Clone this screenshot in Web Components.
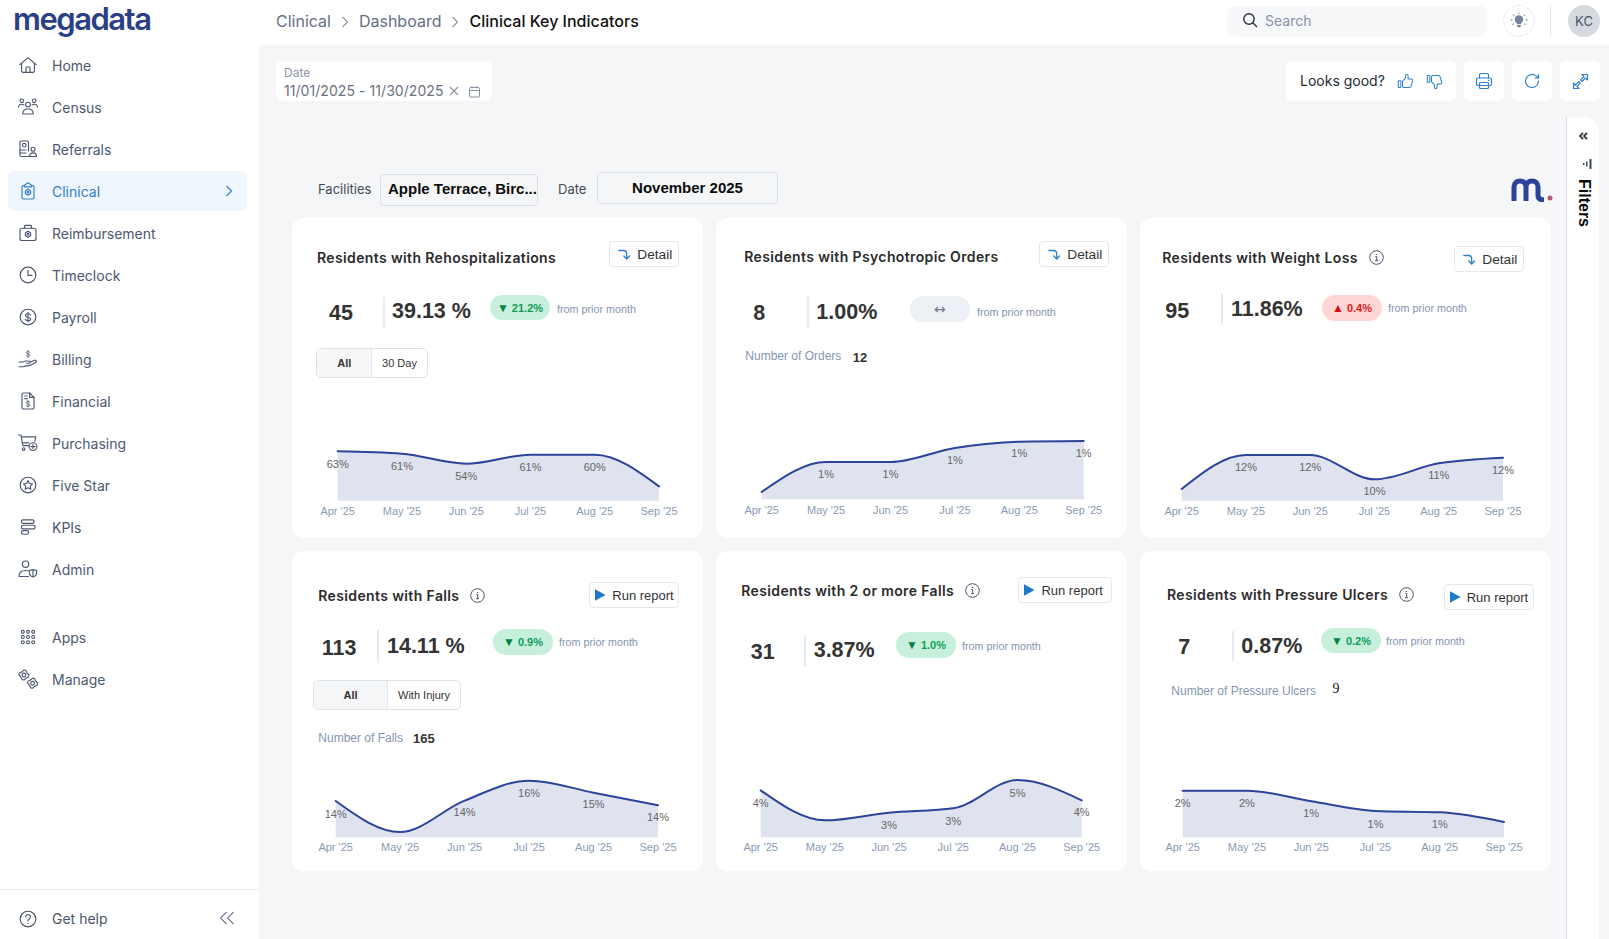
<!DOCTYPE html>
<html lang="en">
<head>
<meta charset="UTF-8">
<title>Clinical Key Indicators</title>
<style>
  html, body { margin: 0; height: 100%; }
  body { display: flex; width: 1609px; height: 939px; overflow: hidden; background: #f5f6f8; font-family: Inter, "Liberation Sans", sans-serif; }
</style>
</head>
<body>
<side-nav>
  <nav-item icon="home">Home</nav-item>
  <nav-item icon="census">Census</nav-item>
  <nav-item icon="referrals">Referrals</nav-item>
  <nav-item icon="clinical" active>Clinical</nav-item>
  <nav-item icon="reimb">Reimbursement</nav-item>
  <nav-item icon="clock">Timeclock</nav-item>
  <nav-item icon="payroll">Payroll</nav-item>
  <nav-item icon="billing">Billing</nav-item>
  <nav-item icon="financial">Financial</nav-item>
  <nav-item icon="cart">Purchasing</nav-item>
  <nav-item icon="star">Five Star</nav-item>
  <nav-item icon="kpis">KPIs</nav-item>
  <nav-item icon="admin">Admin</nav-item>
  <nav-item icon="apps" style="margin-top:26px">Apps</nav-item>
  <nav-item icon="manage">Manage</nav-item>
</side-nav>
<main-area>
  <top-bar></top-bar>
  <tool-bar></tool-bar>
  <dash-body></dash-body>
</main-area>

<script>
  // small $ used by the money icons
  const dollar = (x, y, s) => `<g transform="translate(${x} ${y}) scale(${s})"><path d="M2.6-1.9C2.2-2.8 1.3-3.3 0-3.3c-1.5 0-2.6.7-2.6 1.7C-2.6.9 2.7-.4 2.7 2c0 1-1.2 1.7-2.7 1.7-1.4 0-2.4-.5-2.8-1.4M0-4.8V5"/></g>`;

  function gear(cx, cy, r) {
    let d = '';
    for (let i = 0; i < 16; i++) {
      const a = i * Math.PI / 8, rr = i % 4 < 2 ? r : r * .78;
      d += (i ? 'L' : 'M') + (cx + rr * Math.cos(a)).toFixed(2) + ' ' + (cy + rr * Math.sin(a)).toFixed(2);
    }
    return `<path d="${d}z"/><circle cx="${cx}" cy="${cy}" r="${(r * .38).toFixed(2)}"/>`;
  }

  const hex = (cx, cy) => `<path d="M${cx} ${cy - 3}l2.6 1.5v3L${cx} ${cy + 3}l-2.6-1.5v-3z"/><circle cx="${cx}" cy="${cy}" r=".9"/>`;

  const ICONS = {
    home: '<path d="M1.8 9.6 10 2.6l8.2 7"/><path d="M3.6 8.2V16A1.4 1.4 0 0 0 5 17.4h10a1.4 1.4 0 0 0 1.4-1.4V8.2"/><path d="M8 17.4v-4.6a.8.8 0 0 1 .8-.8h2.4a.8.8 0 0 1 .8.8v4.6"/>',
    census: '<circle cx="3.8" cy="3.8" r="1.8"/><circle cx="16.2" cy="3.8" r="1.8"/><circle cx="10" cy="7.6" r="2.4"/><path d="M.2 10C.8 8.2 2 7.2 3.8 7.2c.8 0 1.5.2 2.1.7"/><path d="M19.8 10c-.6-1.8-1.8-2.8-3.6-2.8-.8 0-1.5.2-2.1.7"/><path d="M4.8 16.2c0-2.6 2-4.2 5.2-4.2s5.2 1.6 5.2 4.2v.8H4.8z"/>',
    referrals: '<path d="M10.5 17.5H3.4A1.4 1.4 0 0 1 2 16.1V3.4A1.4 1.4 0 0 1 3.4 2h5.7a1.4 1.4 0 0 1 1.4 1.4V12"/><circle cx="6.2" cy="6.2" r="1.8"/><path d="M2 11h6M2 14h6"/><circle cx="15" cy="10.2" r="2"/><path d="M11.5 17.5c0-2.3 1.4-3.7 3.5-3.7s3.5 1.4 3.5 3.7z"/>',
    clinical: '<path d="M6.5 4.2 10 1.8l3.5 2.4v1.6h-7z"/><path d="M6.5 4.6H5.4A1.4 1.4 0 0 0 4 6v10.6A1.4 1.4 0 0 0 5.4 18h9.2a1.4 1.4 0 0 0 1.4-1.4V6a1.4 1.4 0 0 0-1.4-1.4h-1.1"/>' + hex(10, 11.2),
    reimb: '<rect x="2" y="5.2" width="16" height="12.3" rx="2"/><path d="M6.5 5.2V3.4a1 1 0 0 1 1-1h5a1 1 0 0 1 1 1v1.8"/>' + hex(10, 11.3),
    clock: '<circle cx="10" cy="10" r="7.8"/><path d="M10 5.2v5.2h4"/>',
    payroll: '<circle cx="10" cy="10" r="7.8"/>' + dollar(10, 10, 1),
    billing: dollar(10, 4.8, .7) + '<path d="M1 13h4.2l2.3-1h3.6a1.1 1.1 0 0 1 0 2.2H8.4"/><path d="M12 13.3l4.6-2a1.2 1.2 0 0 1 1.3 2L12 16.4l-5 .7-2 .6H1"/>',
    financial: '<path d="M11.6 2H5.4A1.4 1.4 0 0 0 4 3.4v13.2A1.4 1.4 0 0 0 5.4 18h9.2a1.4 1.4 0 0 0 1.4-1.4V6.4z"/><path d="M11.6 2v4.4H16"/><path d="M6.6 5h2.6M6.6 7.6h2.6"/>' + dollar(10, 12.6, .7),
    cart: '<path d="M.4 2h2.6l1.8 10.6h6.6"/><path d="M3.4 3.8h14.4l-1 4.4"/><path d="M4.4 9.8h6.4"/><circle cx="5.6" cy="16" r="1.3"/><circle cx="15" cy="13.6" r="3.9"/><path d="M15 11.6v4M13 13.6h4"/>',
    star: '<circle cx="10" cy="10" r="7.8"/><path d="m10 5.6 1.4 2.9 3.1.4-2.3 2.2.6 3.1-2.8-1.5-2.8 1.5.6-3.1-2.3-2.2 3.1-.4z"/>',
    kpis: '<rect x="3.5" y="2.8" width="12.5" height="3.6" rx="1.4"/><rect x="3.5" y="8.2" width="13.5" height="3.6" rx="1.4"/><rect x="3.5" y="13.6" width="7" height="3.6" rx="1.4"/>',
    admin: '<circle cx="7.5" cy="5.2" r="3.2"/><path d="M10.2 11.8c-.8-.2-1.7-.3-2.7-.3-4 0-6.5 2-6.5 5.6v.4h9.6"/><path d="M15 10.6c-2 .6-3.6.7-3.6.7v2.6c0 1.9 1.4 3.3 3.6 4.1 2.2-.8 3.6-2.2 3.6-4.1v-2.6s-1.6-.1-3.6-.7zM15 10.6V18"/>',
    apps: [4.8, 10, 15.2].map(y => [4.8, 10, 15.2].map(x => `<circle cx="${x}" cy="${y}" r="1.5"/>`).join('')).join(''),
    manage: gear(6, 6, 5) + gear(14.6, 14.2, 5),
    help: '<circle cx="10" cy="10" r="7.8"/><path d="M7.6 8a2.4 2.4 0 1 1 3.8 1.9c-.8.6-1.4 1-1.4 2"/><path d="M10 14.2v.2"/>'
  };

  const svg = (inner, size = 20, extra = '') =>
    `<svg width="${size}" height="${size}" viewBox="0 0 20 20" fill="none" stroke="currentColor" stroke-width="1.15" stroke-linecap="round" stroke-linejoin="round" ${extra}>${inner}</svg>`;

  class SideNav extends HTMLElement {
    connectedCallback() {
      if (this.shadowRoot) return;
      this.attachShadow({mode: 'open'}).innerHTML = `
        <style>
          :host { display: flex; flex-direction: column; flex: none; width: 259px; height: 939px; background: #fff; }
          .logo { height: 45px; padding-left: 13px; font: 600 31px/38px "Inter", sans-serif; letter-spacing: -1.5px; color: #2a3f86; box-sizing: border-box; }
          nav { display: flex; flex-direction: column; }
          footer { margin-top: auto; height: 50px; border-top: 1px solid #e9eaee; display: flex; align-items: center; padding: 8px 0 0 18px; box-sizing: border-box; color: #4b5563; font-size: 14px; }
          footer span { margin-left: 14px; }
          footer svg:last-child { margin-left: auto; margin-right: 24px; margin-bottom: 2px; color: #737d92; }
        </style>
        <div class="logo">megadata</div>
        <nav><slot></slot></nav>
        <footer>${svg(ICONS.help)}<span>Get help</span>
          <svg width="16" height="14" viewBox="0 0 16 14" fill="none" stroke="currentColor" stroke-width="1.1"><path d="M7.5 1 1.5 7l6 6M14.5 1l-6 6 6 6"/></svg>
        </footer>`;
    }
  }

  class NavItem extends HTMLElement {
    connectedCallback() {
      if (this.shadowRoot) return;
      const active = this.hasAttribute('active');
      this.attachShadow({mode: 'open'}).innerHTML = `
        <style>
          :host { display: flex; align-items: center; height: 40px; margin: 0 12px 2px 8px; padding-left: 10px; box-sizing: border-box; border-radius: 6px; font-size: 14px; color: #4d5870; }
          :host([active]) { background: #f0f6fd; color: #2f7fcb; }
          svg { flex: none; }
          span { margin-left: 14px; }
          .chev { margin: 0 14px 0 auto; }
        </style>
        ${svg(ICONS[this.getAttribute('icon')])}
        <span><slot></slot></span>
        ${active ? '<svg class="chev" width="8" height="12" viewBox="0 0 8 12" fill="none" stroke="currentColor" stroke-width="1.1"><path d="m1.5 1 5 5-5 5"/></svg>' : ''}`;
    }
  }

  class MainArea extends HTMLElement {
    connectedCallback() {
      if (this.shadowRoot) return;
      this.attachShadow({mode: 'open'}).innerHTML = `
        <style>:host { display: flex; flex-direction: column; flex: 1; min-width: 0; height: 939px; }</style>
        <slot></slot>`;
    }
  }

  class TopBar extends HTMLElement {
    connectedCallback() {
      if (this.shadowRoot) return;
      const chev = '<svg class="sep" width="8" height="12" viewBox="0 0 8 12" fill="none" stroke="#8b93a3" stroke-width="1.1"><path d="m1.5 1 5 5-5 5"/></svg>';
      this.attachShadow({mode: 'open'}).innerHTML = `
        <style>
          :host { display: flex; align-items: center; flex: none; height: 45px; padding: 0 9px 3px 17px; box-sizing: border-box; background: #fff; font-size: 16px; color: #667085; }
          .sep { margin: 1px 10px 0; }
          b { font-weight: 500; color: #111; }
          .search { display: flex; align-items: center; width: 260px; height: 32px; margin-left: auto; padding: 0 0 2px 15px; box-sizing: border-box; background: #f7f8f9; border-radius: 9px; font-size: 14px; color: #8791a8; }
          .search svg { margin-right: 7px; }
          .bulb { width: 32px; height: 32px; margin: 0 15px 0 16px; box-sizing: border-box; border: 1px solid #eceef1; border-radius: 50%; display: flex; align-items: center; justify-content: center; }
          .div { width: 1px; height: 32px; background: #e6e8ec; }
          .kc { width: 32px; height: 32px; margin-left: 17px; border-radius: 50%; background: #d5dae1; color: #4b5563; font-size: 13px; display: flex; align-items: center; justify-content: center; }
        </style>
        <span>Clinical</span>${chev}<span>Dashboard</span>${chev}<b>Clinical Key Indicators</b>
        <div class="search">
          <svg width="16" height="16" viewBox="0 0 16 16" fill="none" stroke="#2b2f36" stroke-width="1.4" stroke-linecap="round"><circle cx="7" cy="7" r="5.2"/><path d="m11 11 3.6 3.6"/></svg>
          Search
        </div>
        <div class="bulb">
          <svg width="18" height="18" viewBox="0 0 16 16" fill="#76839a" stroke="#76839a" stroke-width=".9" stroke-linecap="round"><path stroke="none" d="M8 3a3.7 3.7 0 0 0-2.2 6.7c.4.3.6.7.6 1.2h3.2c0-.5.2-.9.6-1.2A3.7 3.7 0 0 0 8 3z"/><path stroke="none" d="M6.5 11.6h3v1.1l-.7.9H7.2l-.7-.9z"/><path d="M8 .8v.6M3 2.6l.5.5M13 2.6l-.5.5M.9 7h1M14.1 7h1M2.4 11l.6-.5M13.6 11l-.6-.5"/></svg>
        </div>
        <div class="div"></div>
        <div class="kc">KC</div>`;
    }
  }

  class ToolBar extends HTMLElement {
    connectedCallback() {
      if (this.shadowRoot) return;
      const blue = 'fill="none" stroke="#2f7fcb" stroke-width="1.2" stroke-linecap="round" stroke-linejoin="round"';
      const thumb = '<rect x="1.5" y="9" width="3" height="8" rx=".5"/><path d="M6.5 9.5 10 6V3a1.5 1.5 0 0 1 3 0v4h4a1.5 1.5 0 0 1 1.4 2l-1.8 6.5a2 2 0 0 1-1.9 1.5H8a1.5 1.5 0 0 1-1.5-1.5z"/>';
      this.attachShadow({mode: 'open'}).innerHTML = `
        <style>
          :host { display: flex; flex: none; gap: 8px; height: 40px; margin-top: 16px; padding: 0 9px 0 17px; }
          .box { background: #fff; border-radius: 6px; display: flex; align-items: center; justify-content: center; width: 40px; height: 40px; }
          .date { flex-direction: column; align-items: flex-start; justify-content: flex-start; width: 216px; padding: 4px 0 0 8px; box-sizing: border-box; margin-right: auto; }
          .date small { font-size: 12px; line-height: 15px; color: #8c95a4; }
          .val { display: flex; align-items: center; margin-top: 1px; font-size: 14px; line-height: 20px; letter-spacing: .06px; color: #6b7280; }
          .val svg { margin-left: 5px; }
          .val svg + svg { margin-left: 9px; }
          .looks { width: 170px; justify-content: flex-start; padding: 0 0 2px 14px; box-sizing: border-box; font-size: 14px; color: #1f2937; }
          .looks svg { margin-top: 2px; }
          .looks svg:first-of-type { margin-left: 12px; }
          .looks svg:last-of-type { margin-left: 12px; }
        </style>
        <div class="box date">
          <small>Date</small>
          <div class="val">11/01/2025 - 11/30/2025
            <svg width="10" height="10" viewBox="0 0 10 10" stroke="#8a93a3" stroke-width="1.1"><path d="m1 1 8 8M9 1 1 9"/></svg>
            <svg width="13" height="13" viewBox="0 0 13 13" fill="none" stroke="#8a93a3" stroke-width="1"><rect x="1.5" y="2.5" width="10" height="9.5" rx="1"/><path d="M1.5 5.5h10M4 1v2.5M9 1v2.5"/></svg>
          </div>
        </div>
        <div class="box looks">Looks good?
          <svg width="17" height="17" viewBox="0 0 20 20" ${blue}>${thumb}</svg>
          <svg width="17" height="17" viewBox="0 0 20 20" ${blue}><g transform="matrix(1 0 0 -1 0 20)">${thumb}</g></svg>
        </div>
        <div class="box"><svg width="18" height="18" viewBox="0 0 18 18" ${blue}><path d="M4.5 6V3A1.5 1.5 0 0 1 6 1.5h6A1.5 1.5 0 0 1 13.5 3v3"/><rect x="1.5" y="6" width="15" height="7.5" rx="1.8"/><rect x="4.5" y="10.5" width="9" height="6" rx="1"/><path d="M13.5 8.3h.4"/></svg></div>
        <div class="box"><svg width="16" height="16" viewBox="0 0 16 16" ${blue}><path d="M14.5 8A6.5 6.5 0 1 1 12.3 3.1L14.5 5"/><path d="M14.5 1.5V5H11"/></svg></div>
        <div class="box"><svg width="17" height="17" viewBox="0 0 17 17" ${blue}><path d="M10 1.5h5.5V7l-2-2-3.3 3.3-1.5-1.5L12 3.5z"/><path d="M7 15.5H1.5V10l2 2 3.3-3.3 1.5 1.5L5 13.5z"/></svg></div>`;
    }
  }

  class DashBody extends HTMLElement {
    connectedCallback() {
      if (this.shadowRoot) return;
      this.attachShadow({mode: 'open'}).innerHTML = `
        <style>
          :host { display: flex; flex: 1; min-height: 0; margin: 16px 9px 0 33px; gap: 15px; }
          .left { width: 1259px; padding-top: 55px; }
          .filters { display: flex; align-items: center; height: 33px; margin-bottom: 13px; padding-left: 26px; font-size: 13px; color: #444b55; }
          .filters span:first-child { width: 62px; }
          .fac, .month { box-sizing: border-box; background: #f5f6f8; border: 1px solid #dcdfe4; border-radius: 4px; font: 700 15px "Liberation Sans", sans-serif; color: #0b0b0b; }
          .fac { width: 158px; height: 32px; margin-top: 2px; padding: 0 7px; line-height: 28px; white-space: nowrap; }
          .dl { margin-left: 20px; width: 39px; }
          .month { width: 181px; height: 32px; margin-bottom: 1px; text-align: center; line-height: 29px; }
          .mark { margin-left: auto; margin-right: -2px; margin-top: 3px; }
          .grid { display: grid; grid-template-columns: repeat(3, 411px); grid-auto-rows: 320px; gap: 13px; }
        </style>
        <div class="left">
          <div class="filters">
            <span>Facilities</span><div class="fac">Apple Terrace, Birc...</div>
            <span class="dl">Date</span><div class="month">November 2025</div>
            <svg class="mark" width="42" height="24" viewBox="0 0 42 24" fill="none"><path d="M3 23V9C3 5 5.5 3 9 3s6 2 6 6v14M15 9c0-4 2.5-6 6-6s6 2 6 6v8c0 3.5 2 5 6 5" stroke="#2b4399" stroke-width="5"/><circle cx="39" cy="20" r="2.5" fill="#b85a7a"/></svg>
          </div>
          <div class="grid"><slot></slot></div>
        </div>
        <filter-rail></filter-rail>`;
      this.innerHTML = CARDS.map(cardMarkup).join('');
    }
  }

  class FilterRail extends HTMLElement {
    connectedCallback() {
      if (this.shadowRoot) return;
      this.attachShadow({mode: 'open'}).innerHTML = `
        <style>
          :host { display: flex; flex-direction: column; align-items: center; flex: none; width: 33px; box-sizing: border-box; background: #fff; border-left: 1px solid #d9dce1; border-top-right-radius: 16px; padding-top: 15px; }
          .bars { margin: 19px 0 0 9px; }
          span { margin: 10px 0 0 1px; writing-mode: vertical-rl; font: 700 16px/18px "Liberation Sans", sans-serif; color: #0b0b0b; }
        </style>
        <svg width="9" height="8" viewBox="0 0 9 8" fill="none" stroke="#2b2f36" stroke-width="1.8"><path d="M4 .8 1 4l3 3.2M8 .8 5 4l3 3.2"/></svg>
        <svg class="bars" width="9" height="10" viewBox="0 0 9 10" fill="#3a4456"><rect x="0" y="4" width="1.5" height="2"/><rect x="3" y="2.5" width="1.5" height="5"/><rect x="6.5" y="0" width="2" height="10"/></svg>
        <span>Filters</span>`;
    }
  }

  // head 70 / metrics 55 / extra 95 / chart 100 = 320px card
  class KpiCard extends HTMLElement {
    connectedCallback() {
      if (this.shadowRoot) return;
      this.attachShadow({mode: 'open'}).innerHTML = `
        <style>
          :host { display: flex; flex-direction: column; background: #fff; border-radius: 12px; color: #333; }
          .head { display: flex; justify-content: space-between; align-items: flex-start; flex: none; height: 70px; padding: 0 var(--btn-right) 0 var(--title-left); }
          .title { display: flex; align-items: center; margin-top: var(--title-top); font-size: 14px; line-height: 20px; font-weight: 600; letter-spacing: .37px; color: #2b2b2b; }
          .action { margin-top: var(--btn-top); }
          .metrics { flex: none; height: 55px; }
          .extra { flex: none; height: 95px; }
        </style>
        <div class="head">
          <div class="title"><slot name="title"></slot></div>
          <div class="action"><slot name="action"></slot></div>
        </div>
        <div class="metrics"><slot name="metrics"></slot></div>
        <div class="extra"><slot name="extra"></slot></div>
        <slot></slot>`;
    }
  }

  class InfoDot extends HTMLElement {
    connectedCallback() {
      if (this.shadowRoot) return;
      this.attachShadow({mode: 'open'}).innerHTML = `
        <style>:host { display: inline-flex; margin-left: 11px; }</style>
        <svg width="15" height="15" viewBox="0 0 15 15" fill="none" stroke="#4a5568" stroke-width="1"><circle cx="7.5" cy="7.5" r="6.8"/><path d="M6.3 6.5h1.4v4M6 10.7h3.1"/><path d="M7.5 4v1" stroke-width="1.3"/></svg>`;
    }
  }

  class KpiBtn extends HTMLElement {
    connectedCallback() {
      if (this.shadowRoot) return;
      const run = this.getAttribute('kind') === 'run';
      this.attachShadow({mode: 'open'}).innerHTML = `
        <style>
          :host { display: inline-flex; align-items: center; box-sizing: border-box; height: 26px; border: 1px solid #e6e8ec; border-radius: 4px; background: #fff; font: 400 ${run ? 13 : 13.7}px "Liberation Sans", sans-serif; color: #333; padding-left: ${run ? 5 : 8}px; }
          svg { flex: none; margin-right: ${run ? 6 : 7}px; }
        </style>
        ${run
          ? '<svg width="11" height="12" viewBox="0 0 11 12" fill="#1f77c9"><path d="M0 .3 10.6 6 0 11.7z"/></svg>'
          : '<svg width="12" height="11" viewBox="0 0 12 11" fill="none" stroke="#2f7fcb" stroke-width="1.3" stroke-linecap="round" stroke-linejoin="round"><path d="M.8 1.5h4.7c2 0 3.2 1.2 3.2 3.2v5"/><path d="M5.8 7 8.7 10 11.5 7"/></svg>'}
        <slot></slot>`;
    }
  }

  class KpiMetrics extends HTMLElement {
    connectedCallback() {
      if (this.shadowRoot) return;
      const m = JSON.parse(this.getAttribute('data'));
      const tones = {
        down: 'background:#c6f0dc;color:#0f9d58',
        up: 'background:#fdd5d5;color:#e21a1a',
        flat: 'background:#edf1f5;color:#6b7a90'
      };
      const arrow = {
        down: '<i style="color:#0b8043">▼</i> ',
        up: '<i style="color:#d90f0f">▲</i> ',
        flat: '<i style="color:#6b7a90;font:400 14px \'DejaVu Sans\',sans-serif">↔</i>'
      }[m.tone];
      this.attachShadow({mode: 'open'}).innerHTML = `
        <style>
          :host { display: grid; grid-template-columns: ${m.div - m.cx}px ${m.px - m.div}px ${m.bx - m.px}px ${m.fx - m.bx}px auto; margin-left: ${m.cx}px; font-family: "Liberation Sans", sans-serif; color: #333; align-items: start; }
          .num { font-size: 21.5px; font-weight: 700; line-height: 24px; white-space: nowrap; }
          .div { width: 2px; background: #e7ebf0; }
          .badge { width: 60px; border-radius: 13px; display: flex; align-items: center; justify-content: center; font-size: 11px; font-weight: 700; white-space: pre; }
          i { font-style: normal; font-size: 12px; }
          .from { font-size: 10.75px; line-height: 16px; color: #8495b0; white-space: nowrap; }
        </style>
        <div class="num" style="margin-top:${m.cy - 82}px">${m.count}</div>
        <div class="div" style="margin-top:${m.dt - 70}px;height:${m.dh}px"></div>
        <div class="num" style="margin-top:${m.py - 82}px">${m.pct}</div>
        <div class="badge" style="margin-top:${m.bt - 70}px;height:${m.bh}px;${tones[m.tone]}">${arrow}${m.delta}</div>
        <div class="from" style="margin-top:${m.fy - 78}px">from prior month</div>`;
    }
  }

  class SegToggle extends HTMLElement {
    connectedCallback() {
      if (this.shadowRoot) return;
      this.attachShadow({mode: 'open'}).innerHTML = `
        <style>
          :host { display: flex; box-sizing: border-box; height: 30px; border: 1px solid #dfe3e8; border-radius: 5px; font: 400 11px/28px "Liberation Sans", sans-serif; color: #333; overflow: hidden; text-align: center; }
          .a { background: #f5f6f8; font-weight: 700; border-right: 1px solid #e5e8ec; box-sizing: border-box; }
          .b { flex: 1; }
        </style>
        <div class="a" style="width:${this.getAttribute('first')}px">All</div>
        <div class="b">${this.getAttribute('second')}</div>`;
    }
  }

  class KpiSub extends HTMLElement {
    connectedCallback() {
      if (this.shadowRoot) return;
      this.attachShadow({mode: 'open'}).innerHTML = `
        <style>
          :host { display: flex; font: 400 12px/16px "Liberation Sans", sans-serif; color: #8495b0; }
          b { font-size: 13px; color: #333; }
          b.plain { font: 400 14px "Liberation Serif", serif; color: #111; }
        </style>
        <span>${this.getAttribute('label')}</span>
        <b class="${this.hasAttribute('plain') ? 'plain' : ''}" style="margin-left:${this.getAttribute('gap')}px;margin-top:${this.getAttribute('drop')}px">${this.getAttribute('value')}</b>`;
    }
  }

  // same curve as d3 curveMonotoneX
  function monotone(p) {
    const n = p.length, s = [], t = [];
    for (let i = 0; i < n - 1; i++) s.push((p[i + 1][1] - p[i][1]) / (p[i + 1][0] - p[i][0]));
    const sign = v => v < 0 ? -1 : 1;
    for (let i = 1; i < n - 1; i++) {
      t[i] = (sign(s[i - 1]) + sign(s[i])) * Math.min(Math.abs(s[i - 1]), Math.abs(s[i]), .25 * Math.abs(s[i - 1] + s[i]));
    }
    t[0] = (3 * s[0] - t[1]) / 2;
    t[n - 1] = (3 * s[n - 2] - t[n - 2]) / 2;
    let d = `M${p[0][0]} ${p[0][1]}`;
    for (let i = 0; i < n - 1; i++) {
      const dx = (p[i + 1][0] - p[i][0]) / 3;
      d += `C${p[i][0] + dx} ${p[i][1] + dx * t[i]} ${p[i + 1][0] - dx} ${p[i + 1][1] - dx * t[i + 1]} ${p[i + 1][0]} ${p[i + 1][1]}`;
    }
    return d;
  }

  const MONTHS = ["Apr '25", "May '25", "Jun '25", "Jul '25", "Aug '25", "Sep '25"];

  class AreaChart extends HTMLElement {
    connectedCallback() {
      if (this.shadowRoot) return;
      const c = JSON.parse(this.getAttribute('data'));
      const pts = c.y.map((y, i) => [+(c.x0 + c.step * i).toFixed(2), y]);
      const line = monotone(pts);
      const last = pts[pts.length - 1][0];
      this.attachShadow({mode: 'open'}).innerHTML = `
        <style>
          :host { display: block; height: 100px; }
          svg { display: block; overflow: visible; font: 11px "Liberation Sans", sans-serif; }
        </style>
        <svg width="411" height="100">
          <path d="${line}L${last} ${c.base}L${pts[0][0]} ${c.base}Z" fill="#dfe3ef"/>
          <path d="${line}" fill="none" stroke="#2b4399" stroke-width="2" stroke-linecap="round"/>
          ${c.labels.map(([i, cy, txt]) => `<text x="${pts[i][0]}" y="${cy + 4}" text-anchor="middle" fill="#666">${txt}</text>`).join('')}
          ${MONTHS.map((m, i) => `<text x="${pts[i][0]}" y="${c.axis + 4}" text-anchor="middle" fill="#8a9bb5">${m}</text>`).join('')}
        </svg>`;
    }
  }

  const CARDS = [
    { title: 'Residents with Rehospitalizations', tl: 25, tt: 29.7, bt: 23.3, br: 23.7, btn: ['detail', 'Detail', 70],
      m: {count: '45', pct: '39.13 %', delta: '21.2%', tone: 'down', cx: 37, cy: 95, div: 91, dt: 79, dh: 31, px: 100, py: 93, bx: 198, bt: 77, bh: 25, fx: 265, fy: 91},
      toggle: {x: 24.3, y: 5.3, w: 111.4, first: 55, second: '30 Day'},
      chart: {x0: 45.67, step: 64.27, y: [13.3, 15.67, 25.67, 16.67, 16.67, 48.33], base: 62.67, axis: 73,
        labels: [[0, 26, '63%'], [1, 28, '61%'], [2, 38, '54%'], [3, 29, '61%'], [4, 29, '60%']]} },
    { title: 'Residents with Psychotropic Orders', tl: 28.3, tt: 28.7, bt: 23.3, br: 17.7, btn: ['detail', 'Detail', 70],
      m: {count: '8', pct: '1.00%', delta: '', tone: 'flat', cx: 37.3, cy: 95, div: 91, dt: 78, dh: 33, px: 100.3, py: 93.7, bx: 194, bt: 78, bh: 26, fx: 261, fy: 94},
      sub: {label: 'Number of Orders', value: '12', x: 29.3, top: 4.7, gap: 11.5, drop: 2},
      chart: {x0: 45.67, step: 64.4, y: [54, 24, 24, 10, 3.67, 3], base: 61.33, axis: 72,
        labels: [[1, 36, '1%'], [2, 36, '1%'], [3, 22, '1%'], [4, 15, '1%'], [5, 15, '1%']]} },
    { title: 'Residents with Weight Loss', info: 1, tl: 22.3, tt: 29.7, bt: 28.3, br: 26.7, btn: ['detail', 'Detail', 70],
      m: {count: '95', pct: '11.86%', delta: '0.4%', tone: 'up', cx: 25.3, cy: 93, div: 81, dt: 76, dh: 31, px: 91, py: 91.3, bx: 182, bt: 77, bh: 26, fx: 248, fy: 90.3},
      chart: {x0: 41.67, step: 64.27, y: [51, 17, 17, 41.33, 25.33, 19.67], base: 62.67, axis: 73,
        labels: [[1, 29, '12%'], [2, 29, '12%'], [3, 53, '10%'], [4, 37, '11%'], [5, 32, '12%']]} },
    { title: 'Residents with Falls', info: 1, tl: 26.3, tt: 34.7, bt: 31.3, br: 23.7, btn: ['run', 'Run report', 90],
      m: {count: '113', pct: '14.11 %', delta: '0.9%', tone: 'down', cx: 29.7, cy: 97.3, div: 85, dt: 79, dh: 33, px: 95, py: 95.3, bx: 201, bt: 78, bh: 26, fx: 267, fy: 91.3},
      toggle: {x: 21, y: 4.3, w: 148, first: 74, second: 'With Injury'},
      sub: {label: 'Number of Falls', value: '165', x: 26.3, top: 19.5, gap: 10, drop: 1},
      chart: {x0: 43.67, step: 64.47, y: [30, 61, 29.67, 9.67, 21.67, 34.33], base: 66.33, axis: 76,
        labels: [[0, 43, '14%'], [2, 41, '14%'], [3, 22, '16%'], [4, 33, '15%'], [5, 46, '14%']]} },
    { title: 'Residents with 2 or more Falls', info: 1, tl: 25.3, tt: 29.7, bt: 26.3, br: 15.3, btn: ['run', 'Run report', 93.3],
      m: {count: '31', pct: '3.87%', delta: '1.0%', tone: 'down', cx: 34.7, cy: 101.3, div: 88, dt: 84, dh: 31, px: 97.7, py: 99, bx: 180, bt: 81, bh: 26, fx: 246, fy: 95},
      chart: {x0: 44.67, step: 64.2, y: [19.33, 49.33, 41.67, 37.33, 9, 29.33], base: 66.33, axis: 76,
        labels: [[0, 32, '4%'], [2, 54, '3%'], [3, 50, '3%'], [4, 22, '5%'], [5, 41, '4%']]} },
    { title: 'Residents with Pressure Ulcers', info: 1, tl: 27, tt: 33.7, bt: 33.3, br: 17.3, btn: ['run', 'Run report', 90],
      m: {count: '7', pct: '0.87%', delta: '0.2%', tone: 'down', cx: 38.3, cy: 96, div: 92, dt: 80, dh: 30, px: 101.3, py: 95, bx: 181, bt: 77, bh: 25, fx: 246, fy: 90.3},
      sub: {label: 'Number of Pressure Ulcers', value: '9', x: 31.3, top: 6.7, gap: 16.5, drop: -2, plain: 1},
      chart: {x0: 42.67, step: 64.27, y: [19.67, 19.67, 30.33, 40, 41.33, 51], base: 66.33, axis: 76,
        labels: [[0, 32, '2%'], [1, 32, '2%'], [2, 42, '1%'], [3, 53, '1%'], [4, 53, '1%']]} }
  ];

  function cardMarkup(c) {
    const t = c.toggle, s = c.sub;
    return `<kpi-card style="--title-left:${c.tl}px;--title-top:${c.tt}px;--btn-top:${c.bt}px;--btn-right:${c.br}px">
      <span slot="title">${c.title}</span>${c.info ? '<info-dot slot="title"></info-dot>' : ''}
      <kpi-btn slot="action" kind="${c.btn[0]}" style="width:${c.btn[2]}px">${c.btn[1]}</kpi-btn>
      <kpi-metrics slot="metrics" data='${JSON.stringify(c.m)}'></kpi-metrics>
      ${t ? `<seg-toggle slot="extra" first="${t.first}" second="${t.second}" style="width:${t.w}px;margin:${t.y}px 0 0 ${t.x}px"></seg-toggle>` : ''}
      ${s ? `<kpi-sub slot="extra" label="${s.label}" value="${s.value}" gap="${s.gap}" drop="${s.drop}" ${s.plain ? 'plain' : ''} style="margin:${s.top}px 0 0 ${s.x}px"></kpi-sub>` : ''}
      <area-chart data='${JSON.stringify(c.chart).replace(/'/g, '&#39;')}'></area-chart>
    </kpi-card>`;
  }

  customElements.define('side-nav', SideNav);
  customElements.define('nav-item', NavItem);
  customElements.define('main-area', MainArea);
  customElements.define('top-bar', TopBar);
  customElements.define('tool-bar', ToolBar);
  customElements.define('filter-rail', FilterRail);
  customElements.define('kpi-card', KpiCard);
  customElements.define('info-dot', InfoDot);
  customElements.define('kpi-btn', KpiBtn);
  customElements.define('kpi-metrics', KpiMetrics);
  customElements.define('seg-toggle', SegToggle);
  customElements.define('kpi-sub', KpiSub);
  customElements.define('area-chart', AreaChart);
  customElements.define('dash-body', DashBody);
</script>
</body>
</html>
